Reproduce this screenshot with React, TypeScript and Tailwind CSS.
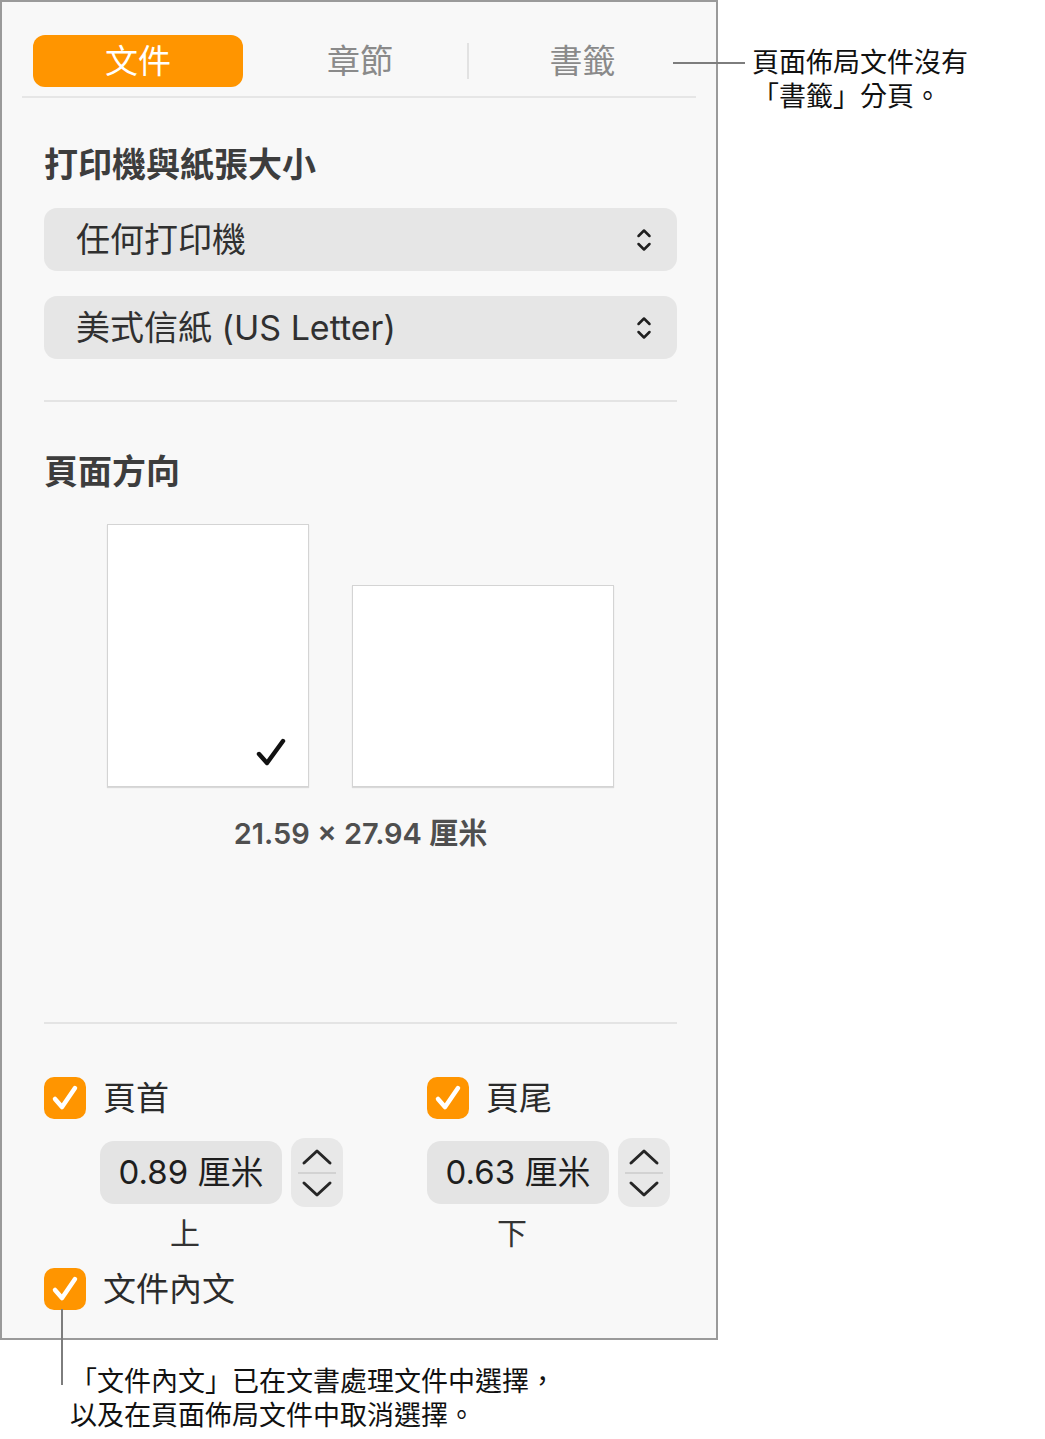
import React from 'react';

const FONT = 'font-["Inter","Noto_Sans_CJK_TC",sans-serif]';

function SelectChevron() {
  return (
    <svg width="18" height="30" viewBox="0 0 18 30" fill="none" stroke="#1f1f1f" strokeWidth={2.5} strokeLinecap="round" strokeLinejoin="round">
      <path d="M3.5 11 L9 5.5 L14.5 11" />
      <path d="M3.5 19 L9 24.5 L14.5 19" />
    </svg>
  );
}

function PopupSelect({ label }: { label: string }) {
  return (
    <div className="flex h-[63px] items-center justify-between rounded-[13px] bg-[#e6e6e6] pl-[32px] pr-[24px]">
      <span className="text-[34px] leading-none text-[#303030]">{label}</span>
      <SelectChevron />
    </div>
  );
}

function Checkbox({ label }: { label: string }) {
  return (
    <div className="flex items-center gap-[17px]">
      <div className="flex h-[42px] w-[42px] items-center justify-center rounded-[10px] bg-[#ff9500]">
        <svg width="42" height="42" viewBox="0 0 42 42" fill="none" stroke="white" strokeWidth={4.5} strokeLinecap="round" strokeLinejoin="round">
          <path d="M11 22 L18 30 L31 11" />
        </svg>
      </div>
      <span className="text-[33px] leading-none text-[#2b2b2b]">{label}</span>
    </div>
  );
}

function Stepper({ value, caption }: { value: string; caption: string }) {
  return (
    <div className="flex flex-col">
      <div className="flex items-center gap-[9px]">
        <div className="flex h-[63px] w-[182px] items-center justify-center rounded-[14px] bg-[#e4e4e4]">
          <span className="text-[33px] leading-none text-[#1e1e1e]">{value}</span>
        </div>
        <div className="flex h-[69px] w-[52px] flex-col items-center justify-center rounded-[14px] bg-[#e8e8e8]">
          <svg width="34" height="22" viewBox="0 0 34 22" fill="none" stroke="#262626" strokeWidth={3} strokeLinecap="round" strokeLinejoin="round">
            <path d="M4 17 L17 5 L30 17" />
          </svg>
          <div className="my-[4px] h-[2px] w-[38px] bg-[#d2d2d2]" />
          <svg width="34" height="22" viewBox="0 0 34 22" fill="none" stroke="#262626" strokeWidth={3} strokeLinecap="round" strokeLinejoin="round">
            <path d="M4 5 L17 17 L30 5" />
          </svg>
        </div>
      </div>
      <div className="mt-[11px] w-[170px] text-center text-[30px] leading-none text-[#333]">{caption}</div>
    </div>
  );
}

function Paper({ w, h, checked }: { w: number; h: number; checked?: boolean }) {
  return (
    <div
      className="relative border border-[#d4d4d4] bg-white shadow-[0_1px_1px_rgba(0,0,0,0.12)]"
      style={{ width: w, height: h }}
    >
      {checked && (
        <svg className="absolute right-[20px] bottom-[18px]" width="34" height="32" viewBox="0 0 34 32" fill="none" stroke="#111" strokeWidth={4.4} strokeLinecap="round" strokeLinejoin="round">
          <path d="M5 18 L13 27 L29 5" />
        </svg>
      )}
    </div>
  );
}

function Inspector() {
  return (
    <div className="flex h-[1340px] w-[718px] shrink-0 flex-col border-2 border-[#9a9a9a] bg-[#f8f8f8]">
      {/* Tabs */}
      <div className="mx-[20px] mt-[33px] grid h-[52px] grid-cols-[218px_218px_1fr] items-center pl-[11px]">
        <div className="flex h-[52px] w-[210px] items-center justify-center rounded-[12px] bg-[#ff9500] text-[33px] leading-none text-white">
          文件
        </div>
        <div className="relative flex h-full items-center justify-center text-[33px] leading-none text-[#8a8a8a]">
          章節
          <div className="absolute right-0 top-[8px] h-[36px] w-[2px] bg-[#e2e2e2]" />
        </div>
        <div className="flex h-full items-center justify-center text-[33px] leading-none text-[#8a8a8a]">書籤</div>
      </div>
      <div className="mx-[20px] mt-[9px] h-[2px] bg-[#e6e6e6]" />

      <div className="flex flex-col pl-[42px] pr-[39px]">
        <h2 className="mt-[47px] text-[34px] font-semibold leading-[40px] text-[#3d3d3d]">打印機與紙張大小</h2>
        <div className="mt-[23px] flex flex-col gap-[25px]">
          <PopupSelect label="任何打印機" />
          <PopupSelect label="美式信紙 (US Letter)" />
        </div>
        <div className="mt-[41px] h-[2px] bg-[#e4e4e4]" />

        <h2 className="mt-[50px] text-[34px] font-semibold leading-[40px] text-[#3d3d3d]">頁面方向</h2>
        <div className="mt-[32px] flex items-end gap-[43px] pl-[63px]">
          <Paper w={202} h={263} checked />
          <Paper w={262} h={202} />
        </div>
        <div className="mt-[32px] text-center text-[29px] font-semibold leading-none text-[#4f4f4f]">
          21.59 × 27.94 厘米
        </div>
        <div className="mt-[174px] h-[2px] bg-[#e4e4e4]" />

        <div className="mt-[53px] grid grid-cols-[383px_1fr]">
          <Checkbox label="頁首" />
          <Checkbox label="頁尾" />
        </div>
        <div className="mt-[19px] grid grid-cols-[383px_1fr]">
          <div className="pl-[56px]">
            <Stepper value="0.89 厘米" caption="上" />
          </div>
          <div>
            <Stepper value="0.63 厘米" caption="下" />
          </div>
        </div>
        <div className="mt-[20px]">
          <Checkbox label="文件內文" />
        </div>
      </div>
    </div>
  );
}

export default function App() {
  return (
    <div className={`relative min-h-[1439px] w-[1045px] bg-white ${FONT}`}>
      <div className="flex">
        <Inspector />
        <div className="pl-[34px] pt-[46px] text-[27px] leading-[34px] text-[#111]">
          <p>頁面佈局文件沒有</p>
          <p>「書籤」分頁。</p>
        </div>
      </div>
      <div className="pl-[70px] pt-[25px] text-[27px] leading-[34px] text-[#111]">
        <p>「文件內文」已在文書處理文件中選擇，</p>
        <p>以及在頁面佈局文件中取消選擇。</p>
      </div>

      {/* leader lines */}
      <div className="absolute left-[673px] top-[62px] h-[2px] w-[72px] bg-[#7d7d7d]" />
      <div className="absolute left-[61px] top-[1309px] h-[76px] w-[2px] bg-[#7d7d7d]" />
    </div>
  );
}
